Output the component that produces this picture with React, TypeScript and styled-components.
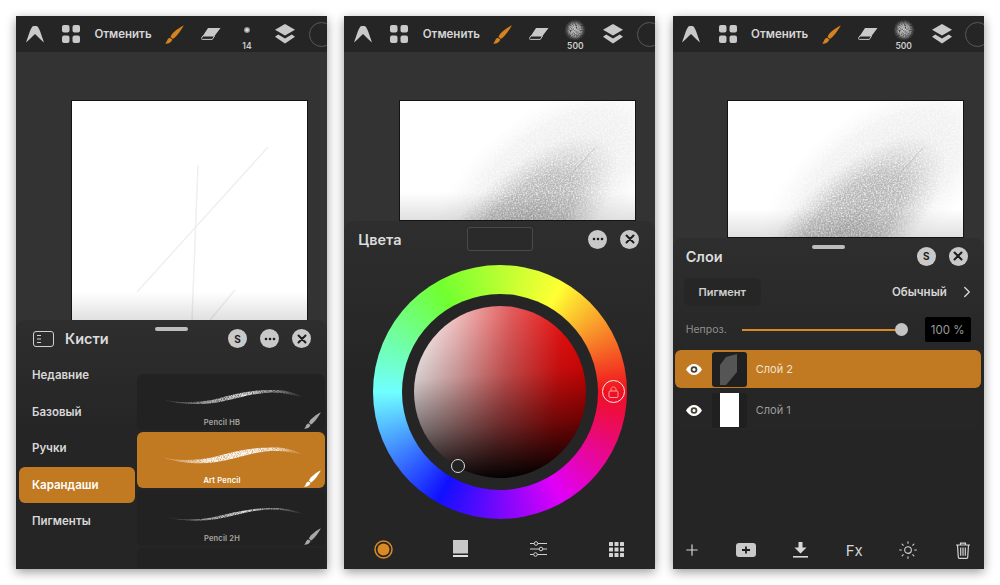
import * as React from 'react'
import styled, { createGlobalStyle } from 'styled-components'
import { ChevronRight, Plus, Sun } from 'lucide-react'

const ORANGE = '#c17a22'
const ICON = '#c9c9c9'

const GlobalStyle = createGlobalStyle`
  html, body {
    margin: 0;
    background: #fff;
  }
  body {
    font-family: 'Inter', 'Liberation Sans', sans-serif;
    -webkit-font-smoothing: antialiased;
  }
`

const SPage = styled.div`
  display: flex;
  gap: 17.35px;
  padding: 16px;
  width: 1000px;
  height: 585px;
  box-sizing: border-box;
`

const SPhone = styled.div`
  position: relative;
  display: flex;
  flex-direction: column;
  flex: 0 0 311px;
  height: 553px;
  overflow: hidden;
  background: #333;
  box-shadow: 0 3px 10px rgba(0, 0, 0, 0.4);
`

const SToolbar = styled.div`
  display: grid;
  grid-template-columns: 37px 36px 68px 35px 38px 34px 42px 30px;
  flex: 0 0 36px;
  width: 320px;
  background: #252525;
  align-items: center;
  justify-items: center;
`

const SUndo = styled.span`
  color: #d6d6d6;
  font-size: 11.5px;
  font-weight: 600;
  white-space: nowrap;
`

const SSizeSlot = styled.div`
  display: flex;
  flex-direction: column;
  align-items: center;
  height: 36px;
  box-sizing: border-box;
  padding-top: 3px;
`

const SSizePreview = styled.div`
  display: flex;
  align-items: center;
  justify-content: center;
  height: 22px;
`

const SSizeDot = styled.div`
  width: 6px;
  height: 6px;
  border-radius: 50%;
  background: radial-gradient(circle, #ddd 15%, #555 100%);
`

const SSizeLabel = styled.span`
  color: #cfcfcf;
  font-size: 8.5px;
  font-weight: 600;
  line-height: 11px;
`

const SColorDot = styled.div`
  width: 23px;
  height: 23px;
  border-radius: 50%;
  border: 1px solid #585858;
`

const SCanvasArea = styled.div`
  flex: 1;
  min-height: 0;
  padding: 48px 19px 0 54.6px;
`

const SCanvas = styled.div<{ $height: number }>`
  position: relative;
  width: 237px;
  height: ${({ $height }) => $height}px;
  box-sizing: border-box;
  border: 1px solid #141414;
  background: #fff;
  overflow: hidden;

  &::after {
    content: '';
    position: absolute;
    left: 0;
    right: 0;
    bottom: 0;
    height: 28px;
    background: linear-gradient(to bottom, rgba(0, 0, 0, 0), rgba(0, 0, 0, 0.12));
  }
`

const SSheet = styled.div<{ $height: number }>`
  position: relative;
  display: flex;
  flex-direction: column;
  flex: 0 0 ${({ $height }) => $height}px;
  border-radius: 9px 9px 0 0;
  background: linear-gradient(to bottom, #2e2e2e, #252525 45%);
`

const SHandle = styled.div`
  position: absolute;
  top: 7px;
  left: 139px;
  width: 33px;
  height: 4px;
  border-radius: 2px;
  background: #bdbdbd;
`

const SHeader = styled.div`
  display: flex;
  align-items: center;
  justify-content: space-between;
  flex: 0 0 37px;
  padding: 0 16px 0 17px;
`

const SColorHeader = styled.div`
  display: grid;
  grid-template-columns: 109px 66px 1fr;
  align-items: center;
  flex: 0 0 36px;
  padding: 0 16px 0 14px;
`

const SHeaderLeft = styled.div`
  display: flex;
  align-items: center;
  gap: 11px;
`

const STitle = styled.span`
  color: #dcdcdc;
  font-size: 14.5px;
  font-weight: 600;
`

const SRoundButtons = styled.div`
  display: flex;
  justify-content: flex-end;
  gap: 13px;
`

const SRoundButton = styled.div`
  display: flex;
  align-items: center;
  justify-content: center;
  width: 19px;
  height: 19px;
  border-radius: 50%;
  background: ${ICON};
  color: #1c1c1c;
  font-size: 10px;
  font-weight: 700;
`

const SBrushBody = styled.div`
  display: grid;
  grid-template-columns: 121px 188px;
  flex: 1;
  min-height: 0;
`

const SCategories = styled.div`
  display: flex;
  flex-direction: column;
  padding-left: 3px;
`

const SCategory = styled.div<{ $active?: boolean }>`
  display: flex;
  align-items: center;
  height: 36.5px;
  width: 116px;
  box-sizing: border-box;
  padding-left: 13px;
  border-radius: 6px;
  background: ${({ $active }) => ($active ? ORANGE : 'transparent')};
  color: ${({ $active }) => ($active ? '#fff' : '#d8d8d8')};
  font-size: 11.5px;
  font-weight: 600;
`

const SCards = styled.div`
  display: flex;
  flex-direction: column;
  gap: 2px;
  padding-top: 17px;
  height: 194px;
  overflow: hidden;
`

const SCard = styled.div<{ $active?: boolean }>`
  position: relative;
  flex: 0 0 56px;
  border-radius: 6px;
  background: ${({ $active }) => ($active ? ORANGE : '#222')};
`

const SCardLabel = styled.span<{ $active?: boolean }>`
  position: absolute;
  left: 0;
  right: 18px;
  top: 44px;
  text-align: center;
  color: ${({ $active }) => ($active ? '#fff' : '#a8a8a8')};
  font-size: 7.5px;
  font-weight: 600;
  letter-spacing: 0.2px;
`

const SStrokeSvg = styled.svg`
  display: block;
`

const SCardBrush = styled.div`
  position: absolute;
  right: 4px;
  bottom: 1px;
  display: flex;
`

const SWheelWrap = styled.div`
  display: flex;
  justify-content: center;
  padding-top: 8px;
`

const SWheel = styled.div`
  position: relative;
  display: flex;
  align-items: center;
  justify-content: center;
  width: 254px;
  height: 254px;
  border-radius: 50%;
  background: conic-gradient(
    from 30deg,
    #ffff33 0deg,
    #f0101e 60deg,
    #e000f8 120deg,
    #1010ff 180deg,
    #70ffff 240deg,
    #70ff30 300deg,
    #ffff33 360deg
  );
`

const SWheelHole = styled.div`
  display: flex;
  align-items: center;
  justify-content: center;
  width: 196px;
  height: 196px;
  border-radius: 50%;
  background: #252525;
`

const SColorDisc = styled.div`
  width: 172px;
  height: 172px;
  border-radius: 50%;
  background:
    linear-gradient(176deg, rgba(0, 0, 0, 0) 8%, rgba(0, 0, 0, 0.16) 40%, rgba(0, 0, 0, 0.52) 68%, #000 98%),
    linear-gradient(96deg, #fff 0%, #ecb8b8 24%, #e05a5a 52%, #ea1010 80%, #e80000 100%);
`

const SLockHandle = styled.div`
  position: absolute;
  left: 229px;
  top: 115px;
  display: flex;
  align-items: center;
  justify-content: center;
  width: 21px;
  height: 21px;
  border-radius: 50%;
  border: 1px solid #eee;
`

const SPicker = styled.div`
  position: absolute;
  left: 78px;
  top: 194px;
  width: 12px;
  height: 12px;
  border-radius: 50%;
  border: 1.5px solid #ddd;
  background: #222;
`

const SSwatch = styled.div`
  height: 24px;
  box-sizing: border-box;
  border: 1px solid #4a4a4a;
  border-radius: 3px;
  background: #2a2a2a;
`

const SColorTabs = styled.div`
  display: grid;
  grid-template-columns: repeat(4, 1fr);
  justify-items: center;
  align-items: center;
  margin-top: auto;
  flex: 0 0 40px;
`

const SLayerHeader = styled(SHeader)`
  flex: 0 0 36px;
  padding-left: 13px;
`

const SModeRow = styled.div`
  display: flex;
  align-items: center;
  justify-content: space-between;
  margin-top: 4px;
  padding: 0 8px 0 11px;
  height: 28px;
`

const SPigment = styled.div`
  display: flex;
  align-items: center;
  justify-content: center;
  width: 77px;
  height: 28px;
  border-radius: 6px;
  background: #262626;
  color: #d0d0d0;
  font-size: 11px;
  font-weight: 600;
`

const SMode = styled.div`
  display: flex;
  align-items: center;
  gap: 11px;
  color: #d6d6d6;
  font-size: 11.5px;
  font-weight: 600;
`

const SOpacityRow = styled.div`
  display: flex;
  align-items: center;
  margin-top: 11px;
  padding: 0 13px;
  height: 25px;
`

const SOpacityLabel = styled.span`
  flex: 0 0 56px;
  color: #8f8f8f;
  font-size: 10.5px;
`

const SSlider = styled.div`
  position: relative;
  display: flex;
  align-items: center;
  justify-content: flex-end;
  width: 166px;
  height: 13px;

  &::before {
    content: '';
    position: absolute;
    left: 0;
    right: 6px;
    top: 5.5px;
    height: 2px;
    background: #d98a24;
  }
`

const SThumb = styled.div`
  position: relative;
  width: 13px;
  height: 13px;
  border-radius: 50%;
  background: #c4c4c4;
`

const SOpacityValue = styled.div`
  display: flex;
  align-items: center;
  justify-content: center;
  width: 46px;
  height: 25px;
  margin-left: 17px;
  border-radius: 2px;
  background: #000;
  color: #9a9a9a;
  font-size: 11.5px;
`

const SLayers = styled.div`
  display: flex;
  flex-direction: column;
  gap: 2px;
  margin-top: 8px;
  padding: 0 3px 0 2px;
`

const SLayerRow = styled.div<{ $active?: boolean }>`
  display: flex;
  align-items: center;
  height: ${({ $active }) => ($active ? 38 : 40)}px;
  padding-left: 11px;
  border-radius: 6px;
  background: ${({ $active }) => ($active ? ORANGE : '#262626')};
  color: ${({ $active }) => ($active ? '#f0e2d0' : '#9c9c9c')};
  font-size: 11px;
`

const SLayerThumb = styled.div`
  display: flex;
  align-items: center;
  justify-content: center;
  width: 35px;
  height: 35px;
  margin: 0 9px 0 10px;
  border-radius: 3px;
  background: #202020;
`

const SLayerPage = styled.div`
  width: 19px;
  height: 34px;
  background: #fff;
`

const SLayerTools = styled.div`
  display: flex;
  align-items: center;
  justify-content: space-between;
  margin-top: auto;
  flex: 0 0 38px;
  padding: 0 11px 0 9px;
  color: #d4d4d4;
`

const SToolSlot = styled.div`
  display: flex;
  align-items: center;
  justify-content: center;
  width: 20px;
  font-size: 15px;
  font-weight: 400;
`

// toolbar and panel icons
function Logo() {
  return (
    <svg width="18" height="17" viewBox="0 0 18 17">
      <path
        d="M6.800 .3C8 -.1 10 -.1 11.200 .3 12.200 .9 13.200 3 14.200 5.500L18 16.500C16 15 12.500 11.500 9 8 5.500 11.500 2 15 0 16.500L3.800 5.500C4.800 3 5.800 .9 6.800 .3Z"
        fill={ICON}
      />
    </svg>
  )
}

function GridIcon() {
  return (
    <svg width="18" height="18" viewBox="0 0 18 18" fill={ICON}>
      <rect x="0" y="0" width="7.500" height="7.500" rx="2" />
      <rect x="10.500" y="0" width="7.500" height="7.500" rx="2" />
      <rect x="0" y="10.500" width="7.500" height="7.500" rx="2" />
      <rect x="10.500" y="10.500" width="7.500" height="7.500" rx="2" />
    </svg>
  )
}

function BrushIcon({ color, size = 19 }: { color: string; size?: number }) {
  return (
    <svg width={size} height={size} viewBox="0 0 19 19" fill={color}>
      <path d="M18.800 .2C16 1.800 10.500 5 7.500 8.500 6.500 9.800 5.800 11 5.500 12L8 14C9 13.300 10.500 12 12 10.300 14.800 7 17.500 3 18.800 .2Z" />
      <path d="M4.900 12.800C3.400 13.200 2.600 14.200 2 15.800 1.600 16.800 1 17.800 .2 18.600 2.400 18.800 4.800 18.200 6 16.800 6.800 15.800 7.200 15 7.400 14.500Z" />
    </svg>
  )
}

function EraserIcon() {
  return (
    <svg width="20" height="12" viewBox="0 0 20 12">
      <path d="M7 0H19.500L13.500 8H1.800Z" fill={ICON} />
      <path d="M1.800 8H13.500L11.300 11.400H1.300C.5 11.400 .2 10.800 .5 10.200Z" fill="none" stroke={ICON} strokeWidth="1" />
    </svg>
  )
}

function LayersIcon() {
  return (
    <svg width="20" height="20" viewBox="0 0 20 20" fill={ICON}>
      <path d="M10 0L20 5.800 10 11.600 0 5.800Z" />
      <path d="M3.200 10.600L10 14.500 16.800 10.600 20 12.800 10 19.600 0 12.800Z" />
    </svg>
  )
}

// speckle mask shared by the sprayed marks and pencil strokes
function Grain({ id, frequency }: { id: string; frequency: number }) {
  return (
    <filter id={id} x="0" y="0" width="100%" height="100%" colorInterpolationFilters="sRGB">
      <feTurbulence type="fractalNoise" baseFrequency={frequency} numOctaves={3} seed={4} result="noise" />
      <feColorMatrix
        in="noise"
        type="matrix"
        values="0 0 0 0 0  0 0 0 0 0  0 0 0 0 0  1.7 0 0 0 -0.05"
      />
      <feGaussianBlur stdDeviation="0.6" result="speckle" />
      <feComposite in="SourceGraphic" in2="speckle" operator="in" />
    </filter>
  )
}

function SprayPreview({ id }: { id: string }) {
  return (
    <svg width="22" height="22" viewBox="0 0 22 22">
      <defs>
        <Grain id={`${id}-grain`} frequency={0.8} />
        <radialGradient id={`${id}-fill`}>
          <stop offset="0%" stopColor="#c8c8c8" />
          <stop offset="55%" stopColor="#a8a8a8" />
          <stop offset="100%" stopColor="#555" stopOpacity="0" />
        </radialGradient>
      </defs>
      <circle cx="11" cy="11" r="11" fill={`url(#${id}-fill)`} filter={`url(#${id}-grain)`} />
    </svg>
  )
}

// the sprayed diagonal cloud on the artboard
function SprayCloud({ id }: { id: string }) {
  return (
    <svg width="235" height="219" viewBox="0 0 235 219" style={{ display: 'block' }}>
      <defs>
        <Grain id={`${id}-grain`} frequency={0.6} />
        <radialGradient id={`${id}-core`}>
          <stop offset="0%" stopColor="#999" stopOpacity="0.75" />
          <stop offset="55%" stopColor="#a0a0a0" stopOpacity="0.62" />
          <stop offset="100%" stopColor="#bbb" stopOpacity="0" />
        </radialGradient>
        <radialGradient id={`${id}-halo`}>
          <stop offset="0%" stopColor="#c4c4c4" stopOpacity="0.45" />
          <stop offset="70%" stopColor="#d4d4d4" stopOpacity="0.3" />
          <stop offset="100%" stopColor="#e4e4e4" stopOpacity="0" />
        </radialGradient>
      </defs>
      <g filter={`url(#${id}-grain)`}>
        <ellipse cx="150" cy="82" rx="140" ry="72" fill={`url(#${id}-halo)`} transform="rotate(-38 150 82)" />
        <ellipse cx="124" cy="122" rx="118" ry="52" fill={`url(#${id}-core)`} transform="rotate(-42 124 122)" />
      </g>
      <path d="M195 47L172 72" stroke="#888" strokeOpacity="0.3" strokeWidth="1" />
    </svg>
  )
}

function SketchLines() {
  return (
    <svg width="235" height="219" viewBox="0 0 235 219" fill="none" stroke="#efefef" strokeWidth="1.500" style={{ display: 'block' }}>
      <path d="M196 46L65 191" />
      <path d="M126 64L120 219" />
      <path d="M163 189L138 219" />
    </svg>
  )
}

function BrushStroke({ name, bright, thin }: { name: string; bright?: boolean; thin?: boolean }) {
  const peak = bright ? '#fff' : '#e4e4e4'
  return (
    <SStrokeSvg width="188" height="42" viewBox="0 0 188 42">
      <defs>
        <Grain id={`grain-${name}`} frequency={1.1} />
        <linearGradient id={`stroke-${name}`} x1="0" x2="1" y1="0" y2="0">
          <stop offset="0%" stopColor={peak} stopOpacity="0.05" />
          <stop offset="35%" stopColor={peak} stopOpacity={bright ? 0.95 : 0.7} />
          <stop offset="60%" stopColor={peak} stopOpacity="1" />
          <stop offset="80%" stopColor={peak} stopOpacity={bright ? 0.85 : 0.6} />
          <stop offset="100%" stopColor={peak} stopOpacity="0" />
        </linearGradient>
      </defs>
      <path
        d={
          thin
            ? 'M21 25C40 31 60 30 75 27.500C95 23 115 17 140 18C150 18.500 160 21 167 24.500C155 21.500 145 19.500 135 19.500C115 19.500 100 25.500 80 29C60 32 40 31 21 25Z'
            : bright
              ? 'M21 24C40 30 60 28 75 25.500C95 20 115 14.500 140 15.500C150 16 160 19 167 23C155 20 145 18.500 135 19C115 20 100 27 80 30C60 33 40 31 21 24Z'
              : 'M21 24C40 30 60 28.500 75 26C95 20.500 115 15 140 16C150 16.500 160 19.500 167 23.500C155 20.500 145 18.500 135 18.500C115 19 100 25 80 28.500C60 31.500 40 30.500 21 24Z'
        }
        fill={`url(#stroke-${name})`}
        filter={`url(#grain-${name})`}
      />
    </SStrokeSvg>
  )
}

function CloseGlyph() {
  return (
    <svg width="10" height="10" viewBox="0 0 10 10" stroke="#1c1c1c" strokeWidth="2" strokeLinecap="round">
      <path d="M1.500 1.500L8.500 8.500M8.500 1.500L1.500 8.500" />
    </svg>
  )
}

function DotsGlyph() {
  return (
    <svg width="12" height="4" viewBox="0 0 12 4" fill="#1c1c1c">
      <circle cx="2" cy="2" r="1.300" />
      <circle cx="6" cy="2" r="1.300" />
      <circle cx="10" cy="2" r="1.300" />
    </svg>
  )
}

function EyeIcon() {
  return (
    <svg width="16" height="11" viewBox="0 0 16 11">
      <path d="M0 5.500C2 2 5 0 8 0S14 2 16 5.500C14 9 11 11 8 11S2 9 0 5.500Z" fill="#fff" />
      <circle cx="8" cy="5.500" r="3.300" fill="#4a4030" />
      <circle cx="8" cy="5.500" r="1.500" fill="#fff" />
    </svg>
  )
}

function PanelIcon() {
  return (
    <svg width="21" height="16" viewBox="0 0 21 16" fill="none" stroke="#d0d0d0" strokeWidth="1">
      <rect x=".5" y=".5" width="20" height="15" rx="2.500" />
      <path d="M4 4.500H8M4 8H8M4 11.500H8" strokeWidth="1.200" />
    </svg>
  )
}

function LockIcon() {
  return (
    <svg width="11" height="12" viewBox="0 0 11 12" fill="none" stroke="#f4a0a8" strokeWidth="1">
      <rect x="1" y="5" width="9" height="6.500" rx="1" />
      <path d="M3 5V3.500C3 2 4 1 5.500 1S8 2 8 3.500V5" />
    </svg>
  )
}

function WheelTabIcon() {
  return (
    <svg width="19" height="19" viewBox="0 0 19 19">
      <circle cx="9.500" cy="9.500" r="8.500" fill="none" stroke="#d98a24" strokeWidth="1.500" />
      <circle cx="9.500" cy="9.500" r="6" fill="#d98a24" />
    </svg>
  )
}

function SwatchTabIcon() {
  return (
    <svg width="15" height="18" viewBox="0 0 15 18" fill={ICON}>
      <rect x="0" y="0" width="15" height="13.500" />
      <rect x="0" y="15" width="15" height="2" fill="#e0e0e0" />
    </svg>
  )
}

function SlidersTabIcon() {
  return (
    <svg width="17" height="16" viewBox="0 0 17 16" fill="#252525" stroke="#d0d0d0" strokeWidth="1">
      <path d="M0 2.500H17M0 8H17M0 13.500H17" />
      <circle cx="6" cy="2.500" r="1.800" />
      <circle cx="11" cy="8" r="1.800" />
      <circle cx="5.500" cy="13.500" r="1.800" />
    </svg>
  )
}

function DotsTabIcon() {
  const cells = [0, 5.5, 11]
  return (
    <svg width="15" height="15" viewBox="0 0 15 15" fill="#d4d4d4">
      {cells.map(y =>
        cells.map(x => <rect key={`${x}-${y}`} x={x} y={y} width="4" height="4" rx=".5" />)
      )}
    </svg>
  )
}

function AddFilledIcon() {
  return (
    <svg width="20" height="14" viewBox="0 0 20 14">
      <rect x="0" y="0" width="20" height="14" rx="3" fill={ICON} />
      <path d="M10 3.500V10.500M6 7H14" stroke="#1c1c1c" strokeWidth="1.800" />
    </svg>
  )
}

function DownloadIcon() {
  return (
    <svg width="15" height="16" viewBox="0 0 15 16" fill="#d8d8d8">
      <path d="M5.500 0H9.500V5.500H13.500L7.500 11.500 1.500 5.500H5.500Z" />
      <rect x="0" y="14" width="15" height="1.600" />
    </svg>
  )
}

function TrashIcon() {
  return (
    <svg width="14" height="17" viewBox="0 0 14 17" fill="none" stroke="#d4d4d4" strokeWidth="1.200">
      <path d="M0 3H14M4.500 3V1.200H9.500V3" />
      <path d="M1.500 3L2.300 15.300C2.300 15.900 2.800 16.300 3.300 16.300H10.700C11.200 16.300 11.700 15.900 11.700 15.300L12.500 3" />
      <path d="M4.700 5.500V13.800M7 5.500V13.800M9.300 5.500V13.800" />
    </svg>
  )
}

function Toolbar({ size, spray }: { size: string; spray?: string }) {
  return (
    <SToolbar>
      <Logo />
      <GridIcon />
      <SUndo>Отменить</SUndo>
      <BrushIcon color="#d5831f" />
      <EraserIcon />
      <SSizeSlot>
        <SSizePreview>{spray ? <SprayPreview id={spray} /> : <SSizeDot />}</SSizePreview>
        <SSizeLabel>{size}</SSizeLabel>
      </SSizeSlot>
      <LayersIcon />
      <SColorDot />
    </SToolbar>
  )
}

const categories = ['Недавние', 'Базовый', 'Ручки', 'Карандаши', 'Пигменты']

const brushes = [
  { name: 'Pencil HB', id: 'hb' },
  { name: 'Art Pencil', id: 'art', active: true },
  { name: 'Pencil 2H', id: 'two-h', thin: true },
]

function BrushesPanel() {
  return (
    <SSheet $height={249}>
      <SHandle />
      <SHeader>
        <SHeaderLeft>
          <PanelIcon />
          <STitle>Кисти</STitle>
        </SHeaderLeft>
        <SRoundButtons>
          <SRoundButton>S</SRoundButton>
          <SRoundButton>
            <DotsGlyph />
          </SRoundButton>
          <SRoundButton>
            <CloseGlyph />
          </SRoundButton>
        </SRoundButtons>
      </SHeader>
      <SBrushBody>
        <SCategories>
          {categories.map(item => (
            <SCategory key={item} $active={item === 'Карандаши'}>
              {item}
            </SCategory>
          ))}
        </SCategories>
        <SCards>
          {brushes.map(brush => (
            <SCard key={brush.id} $active={brush.active}>
              <BrushStroke name={brush.id} bright={brush.active} thin={brush.thin} />
              <SCardLabel $active={brush.active}>{brush.name}</SCardLabel>
              <SCardBrush>
                <BrushIcon color={brush.active ? '#fff' : '#a8a8a8'} size={17} />
              </SCardBrush>
            </SCard>
          ))}
          <SCard />
        </SCards>
      </SBrushBody>
    </SSheet>
  )
}

function ColorsPanel() {
  return (
    <SSheet $height={348}>
      <SColorHeader>
        <STitle>Цвета</STitle>
        <SSwatch />
        <SRoundButtons>
          <SRoundButton>
            <DotsGlyph />
          </SRoundButton>
          <SRoundButton>
            <CloseGlyph />
          </SRoundButton>
        </SRoundButtons>
      </SColorHeader>
      <SWheelWrap>
        <SWheel>
          <SWheelHole>
            <SColorDisc />
          </SWheelHole>
          <SLockHandle>
            <LockIcon />
          </SLockHandle>
          <SPicker />
        </SWheel>
      </SWheelWrap>
      <SColorTabs>
        <WheelTabIcon />
        <SwatchTabIcon />
        <SlidersTabIcon />
        <DotsTabIcon />
      </SColorTabs>
    </SSheet>
  )
}

function LayersPanel() {
  return (
    <SSheet $height={331}>
      <SHandle />
      <SLayerHeader>
        <STitle>Слои</STitle>
        <SRoundButtons>
          <SRoundButton>S</SRoundButton>
          <SRoundButton>
            <CloseGlyph />
          </SRoundButton>
        </SRoundButtons>
      </SLayerHeader>
      <SModeRow>
        <SPigment>Пигмент</SPigment>
        <SMode>
          Обычный
          <ChevronRight size={18} strokeWidth={1.8} />
        </SMode>
      </SModeRow>
      <SOpacityRow>
        <SOpacityLabel>Непроз.</SOpacityLabel>
        <SSlider>
          <SThumb />
        </SSlider>
        <SOpacityValue>100 %</SOpacityValue>
      </SOpacityRow>
      <SLayers>
        <SLayerRow $active>
          <EyeIcon />
          <SLayerThumb>
            <svg width="35" height="35" viewBox="0 0 35 35">
              <path d="M14 5L25 2 25 20 14 33 8 33 8 13Z" fill="#555" />
            </svg>
          </SLayerThumb>
          Слой 2
        </SLayerRow>
        <SLayerRow>
          <EyeIcon />
          <SLayerThumb>
            <SLayerPage />
          </SLayerThumb>
          Слой 1
        </SLayerRow>
      </SLayers>
      <SLayerTools>
        <SToolSlot>
          <Plus size={18} strokeWidth={1.6} />
        </SToolSlot>
        <SToolSlot>
          <AddFilledIcon />
        </SToolSlot>
        <SToolSlot>
          <DownloadIcon />
        </SToolSlot>
        <SToolSlot>Fx</SToolSlot>
        <SToolSlot>
          <Sun size={20} strokeWidth={1.3} />
        </SToolSlot>
        <SToolSlot>
          <TrashIcon />
        </SToolSlot>
      </SLayerTools>
    </SSheet>
  )
}

export default function App() {
  return (
    <SPage>
      <GlobalStyle />
      <SPhone>
        <Toolbar size="14" />
        <SCanvasArea>
          <SCanvas $height={221}>
            <SketchLines />
          </SCanvas>
        </SCanvasArea>
        <BrushesPanel />
      </SPhone>
      <SPhone>
        <Toolbar size="500" spray="tool-a" />
        <SCanvasArea>
          <SCanvas $height={121}>
            <SprayCloud id="cloud-a" />
          </SCanvas>
        </SCanvasArea>
        <ColorsPanel />
      </SPhone>
      <SPhone>
        <Toolbar size="500" spray="tool-b" />
        <SCanvasArea>
          <SCanvas $height={138}>
            <SprayCloud id="cloud-b" />
          </SCanvas>
        </SCanvasArea>
        <LayersPanel />
      </SPhone>
    </SPage>
  )
}
